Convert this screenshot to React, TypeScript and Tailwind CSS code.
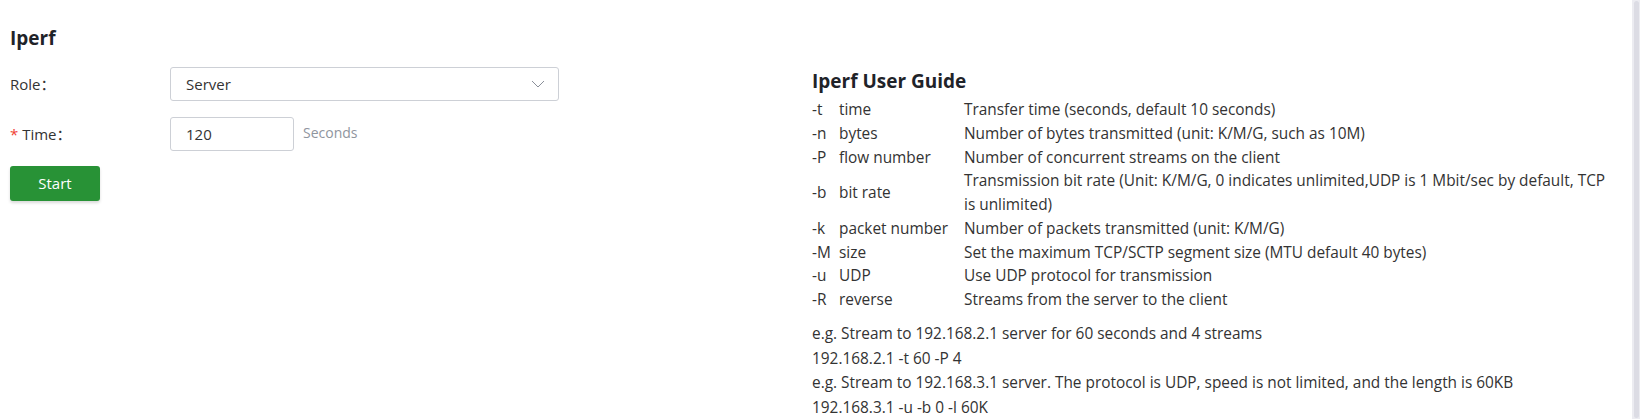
const guide = [
  { flag: '-t', name: 'time', desc: 'Transfer time (seconds, default 10 seconds)' },
  { flag: '-n', name: 'bytes', desc: 'Number of bytes transmitted (unit: K/M/G, such as 10M)' },
  { flag: '-P', name: 'flow number', desc: 'Number of concurrent streams on the client' },
  {
    flag: '-b',
    name: 'bit rate',
    desc: 'Transmission bit rate (Unit: K/M/G, 0 indicates unlimited,UDP is 1 Mbit/sec by default, TCP is unlimited)',
  },
  { flag: '-k', name: 'packet number', desc: 'Number of packets transmitted (unit: K/M/G)' },
  { flag: '-M', name: 'size', desc: 'Set the maximum TCP/SCTP segment size (MTU default 40 bytes)' },
  { flag: '-u', name: 'UDP', desc: 'Use UDP protocol for transmission' },
  { flag: '-R', name: 'reverse', desc: 'Streams from the server to the client' },
];

const examples = [
  'e.g. Stream to 192.168.2.1 server for 60 seconds and 4 streams',
  '192.168.2.1 -t 60 -P 4',
  'e.g. Stream to 192.168.3.1 server. The protocol is UDP, speed is not limited, and the length is 60KB',
  '192.168.3.1 -u -b 0 -l 60K',
];

export default function App() {
  return (
    <div className="flex h-[419px] w-full overflow-hidden bg-white font-['Open_Sans','Noto_Sans_CJK_SC',sans-serif] text-[15px] text-[#333]">
      <div className="flex flex-1">
        {/* Form */}
        <div className="w-[812px] shrink-0 pl-[10px] pt-[24px]">
          <h2 className="text-[19px] font-bold leading-[28px] text-[#1f2329]">Iperf</h2>

          <div className="mt-[15px] flex h-[34px] items-center">
            <label className="w-[160px]">Role：</label>
            <div className="flex h-[34px] w-[389px] items-center justify-between rounded-[3px] border border-[#cdd0d6] pl-[15px] pr-[13px]">
              <span>Server</span>
              <svg width="14" height="8" viewBox="0 0 14 8" fill="none">
                <path d="M1 1 L7 7 L13 1" stroke="#8a8f99" strokeWidth="1" />
              </svg>
            </div>
          </div>

          <div className="mt-[16px] flex h-[34px] items-center">
            <label className="w-[160px]">
              <span className="text-[#f04134]">*</span> Time：
            </label>
            <div className="flex h-[34px] w-[124px] items-center rounded-[3px] border border-[#cdd0d6] pl-[15px]">
              120
            </div>
            <span className="mb-[3px] ml-[9px] text-[14px] text-[#8f959e]">Seconds</span>
          </div>

          <button className="mt-[15px] h-[35px] w-[90px] rounded-[3px] bg-[#289236] text-white shadow-[0_2px_3px_rgba(0,0,0,0.15)]">
            Start
          </button>
        </div>

        {/* Guide */}
        <div className="flex-1 pr-[20px] pt-[67px] text-[15.4px]">
          <h3 className="text-[19px] font-bold leading-[28px] text-[#1f2329]">Iperf User Guide</h3>
          <div className="mt-[3px] leading-[23.75px]">
            {guide.map((g) => (
              <div key={g.flag} className="flex items-center">
                <span className="w-[27px] shrink-0">{g.flag}</span>
                <span className="w-[125px] shrink-0">{g.name}</span>
                <span className="flex-1">{g.desc}</span>
              </div>
            ))}
          </div>
          <div className="mt-[10px] leading-[24.8px]">
            {examples.map((e) => (
              <div key={e}>{e}</div>
            ))}
          </div>
        </div>
      </div>

      {/* Scrollbar */}
      <div className="flex w-[8px] justify-center bg-[#ececf1] py-[1px]">
        <div className="w-[5px] rounded-full bg-[#dcdce4]" />
      </div>
    </div>
  );
}
